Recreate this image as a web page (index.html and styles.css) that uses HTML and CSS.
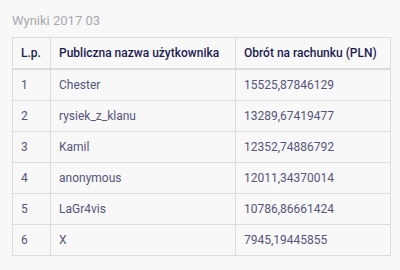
FILE: index.html
```html
<!DOCTYPE html>
<html lang="pl">
<head>
<meta charset="utf-8">
<link rel="stylesheet" href="styles.css">
</head>
<body>
<div class="page">
  <h2 class="title">Wyniki 2017 03</h2>
  <table class="results">
    <colgroup>
      <col class="c-lp">
      <col class="c-name">
      <col class="c-val">
    </colgroup>
    <thead>
      <tr><th>L.p.</th><th>Publiczna nazwa użytkownika</th><th>Obrót na rachunku (PLN)</th></tr>
    </thead>
    <tbody>
      <tr><td>1</td><td>Chester</td><td>15525,87846129</td></tr>
      <tr><td>2</td><td>rysiek_z_klanu</td><td>13289,67419477</td></tr>
      <tr><td>3</td><td>Kamil</td><td>12352,74886792</td></tr>
      <tr><td>4</td><td>anonymous</td><td>12011,34370014</td></tr>
      <tr><td>5</td><td>LaGr4vis</td><td>10786,86661424</td></tr>
      <tr><td>6</td><td>X</td><td>7945,19445855</td></tr>
    </tbody>
  </table>
</div>
</body>
</html>
```

FILE: styles.css
```css
html, body {
  margin: 0;
  background: #f8f8f8;
}
body {
  font-family: Roboto, "Liberation Sans", sans-serif;
}
.page {
  padding: 13px 10px 0 12px;
}
.title {
  margin: 0 0 8px 0;
  font-size: 13px;
  line-height: 16px;
  font-weight: 400;
  color: #a9a9b0;
}
.results {
  width: 378px;
  border-collapse: collapse;
  table-layout: fixed;
  font-size: 12px;
  line-height: 14px;
}
.c-lp { width: 38px; }
.c-name { width: 185px; }
.c-val { width: 155px; }
.results th,
.results td {
  border: 1px solid #dcdcdc;
  padding: 8px 8px;
  text-align: left;
  vertical-align: middle;
  white-space: nowrap;
}
.results th {
  font-weight: 500;
  color: #1c1c50;
  border-bottom-width: 2px;
}
.results td {
  color: #56567a;
}
```
